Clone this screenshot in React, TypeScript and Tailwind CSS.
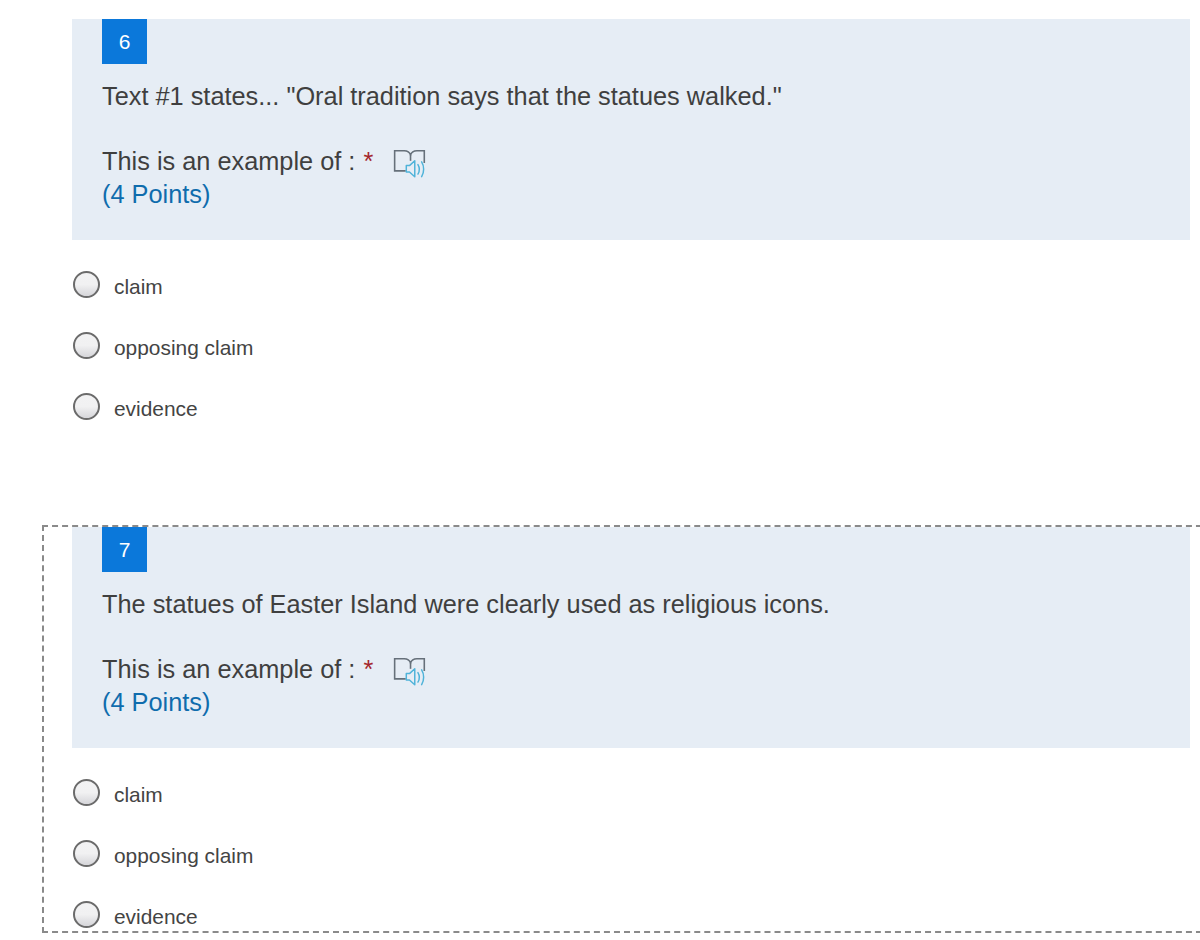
const font = "font-['Liberation_Sans',Arial,sans-serif]"

function ReadAloudIcon() {
  return (
    <svg width="36" height="32" viewBox="0 0 34 30" fill="none" className="shrink-0">
      {/* book */}
      <path
        d="M13 21.5H2.5V2.5H11.5C14 2.5 16.5 3.5 17.5 6.5C18.5 3.5 21 2.5 23.5 2.5H30.5V14"
        stroke="#66707a"
        strokeWidth="1.5"
      />
      <path d="M17.5 6.5V12" stroke="#66707a" strokeWidth="1.5" />
      {/* speaker */}
      <path
        d="M13.5 16.5V22.5H16.5L21.5 27V12L16.5 16.5H13.5Z"
        stroke="#4fb3d9"
        strokeWidth="1.4"
        strokeLinejoin="round"
        fill="#e6edf5"
      />
      <path d="M24.5 15.5C26 18 26 22 24.5 24.5" stroke="#4fb3d9" strokeWidth="1.4" strokeLinecap="round" />
      <path d="M28 13C30.5 17 30.5 23 28 27" stroke="#4fb3d9" strokeWidth="1.4" strokeLinecap="round" />
    </svg>
  )
}

function Option({ label }: { label: string }) {
  return (
    <div className="h-[61px] flex items-center gap-[14px] pl-px">
      <div className="w-[27px] h-[27px] mb-[2px] rounded-full border-2 border-[#6b6b6b] bg-gradient-to-b from-[#f2f2f3] via-[#f1f1f2] to-[#d6d6da] shrink-0" />
      <span className="pt-[4px] text-[20.9px] leading-none text-[#444444]">{label}</span>
    </div>
  )
}

function Question({ number, text }: { number: number; text: string }) {
  return (
    <div>
      <div className="bg-[#e6edf5] h-[221px] pl-[30px] w-[1118px]">
        <div className="w-[45px] h-[45px] bg-[#0b78da] text-white text-[21px] flex items-center justify-center">
          {number}
        </div>
        <p className="mt-[16px] text-[25.34px] leading-[33px] text-[#3f3f3f]">{text}</p>
        <div className="mt-[32px] flex items-start h-[33px] text-[25.34px] leading-[33px] text-[#3f3f3f]">
          <span>This is an example of :</span>
          <span className="ml-[8px] text-[#a4262c]">*</span>
          <span className="ml-[19px] mt-[3px]">
            <ReadAloudIcon />
          </span>
        </div>
        <p className="text-[25.34px] leading-[33px] text-[#0f6cad]">(4 Points)</p>
      </div>
      <div className="mt-[15px]">
        {['claim', 'opposing claim', 'evidence'].map((label) => (
          <Option key={label} label={label} />
        ))}
      </div>
    </div>
  )
}

export default function App() {
  return (
    <div className={`${font} w-[1200px] h-[940px] overflow-hidden bg-white pt-[19px]`}>
      <div className="pl-[72px] h-[506px]">
        <Question number={6} text={'Text #1 states... "Oral tradition says that the statues walked."'} />
      </div>
      <div className="ml-[42px] w-[1170px] h-[408px] border-2 border-dashed border-[#8a8a8a] pl-[28px] overflow-hidden">
        <Question number={7} text="The statues of Easter Island were clearly used as religious icons." />
      </div>
    </div>
  )
}
